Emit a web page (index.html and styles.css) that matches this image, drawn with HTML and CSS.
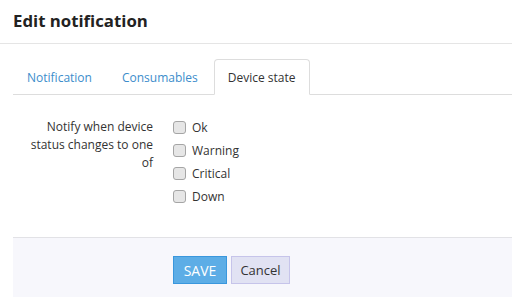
FILE: index.html
```html
<!DOCTYPE html>
<html lang="en">
<head>
    <meta charset="UTF-8">
    <title>Edit notification</title>
    <link rel="stylesheet" href="styles.css">
</head>
<body>

    <!-- Header -->
    <div class="modal-header">
        <h1>Edit notification</h1>
    </div>

    <!-- Tabs -->
    <div class="modal-body">
        <ul class="tabs">
            <li><a href="#">Notification</a></li>
            <li><a href="#">Consumables</a></li>
            <li class="active"><a href="#">Device state</a></li>
        </ul>

        <div class="form-row">
            <label class="form-label">Notify when device status changes to one of</label>
            <div class="checks">
                <label class="check"><input type="checkbox"> Ok</label>
                <label class="check"><input type="checkbox"> Warning</label>
                <label class="check"><input type="checkbox"> Critical</label>
                <label class="check"><input type="checkbox"> Down</label>
            </div>
        </div>
    </div>

    <!-- Footer -->
    <div class="modal-footer">
        <button class="btn btn-primary">SAVE</button>
        <button class="btn btn-default">Cancel</button>
    </div>

</body>
</html>
```

FILE: styles.css
```css
/* General Styles */
* {
    margin: 0;
    padding: 0;
    box-sizing: border-box;
}

body {
    font-family: 'Open Sans', sans-serif;
    font-size: 12px;
    color: #333;
    background: white;
}

/* Header */
.modal-header {
    height: 44px;
    padding: 9px 13px 0;
    border-bottom: 1px solid #e5e5e5;
}

.modal-header h1 {
    font-size: 16.8px;
    font-weight: bold;
    color: #222;
}

/* Body */
.modal-body {
    padding: 15px 0 0 13px;
    height: 193px;
}

.tabs {
    list-style: none;
    display: flex;
    border-bottom: 1px solid #ddd;
    height: 36px;
}

.tabs li {
    margin-right: 2px;
}

.tabs a {
    display: block;
    height: 36px;
    padding: 9px 13px 0;
    color: #3c8dcb;
    text-decoration: none;
    border: 1px solid transparent;
    border-radius: 4px 4px 0 0;
}

.tabs li.active a {
    color: #333;
    background: white;
    border-color: #ddd #ddd white;
}

/* Form */
.form-row {
    display: grid;
    grid-template-columns: 140px 1fr;
    gap: 20px;
    margin-top: 23px;
}

.form-label {
    padding-left: 14px;
    text-align: right;
    line-height: 18px;
}

.checks {
    display: flex;
    flex-direction: column;
    gap: 5px;
}

.check {
    display: flex;
    align-items: center;
    gap: 6px;
    height: 18px;
}

.check input {
    appearance: none;
    width: 13px;
    height: 13px;
    border: 1px solid #a5a5a5;
    border-radius: 3px;
    background: #e6e6e6;
}

/* Footer */
.modal-footer {
    margin-left: 13px;
    height: 60px;
    padding: 18px 0 0 160px;
    background: #f7f7fc;
    border-top: 1px solid #e2e2e6;
    display: flex;
    align-items: flex-start;
    gap: 4px;
}

.btn {
    height: 28px;
    font-family: inherit;
    font-size: 13px;
    padding: 0;
    cursor: pointer;
}

.btn-primary {
    width: 54px;
    font-size: 14px;
    background: #5dade6;
    border: 1px solid #3a97dd;
    color: white;
}

.btn-default {
    width: 59px;
    background: #e1e2f3;
    border: 1px solid #c6c4ea;
    color: #333;
}
```
